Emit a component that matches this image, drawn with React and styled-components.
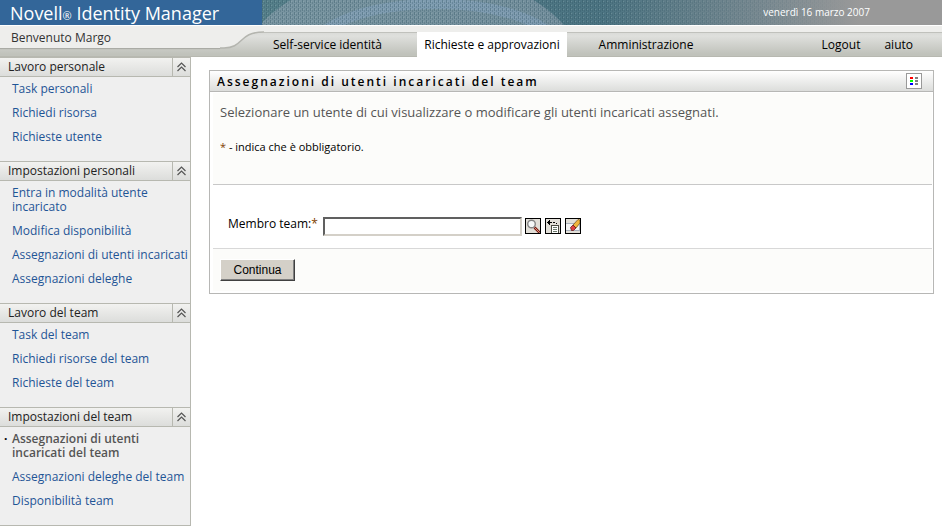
import React, { useState } from 'react'
import styled, { createGlobalStyle, css } from 'styled-components'

const sections = [
  {
    id: 'personal-work',
    title: 'Lavoro personale',
    links: ['Task personali', 'Richiedi risorsa', 'Richieste utente'],
  },
  {
    id: 'personal-settings',
    title: 'Impostazioni personali',
    links: [
      'Entra in modalità utente incaricato',
      'Modifica disponibilità',
      'Assegnazioni di utenti incaricati',
      'Assegnazioni deleghe',
    ],
  },
  {
    id: 'team-work',
    title: 'Lavoro del team',
    links: ['Task del team', 'Richiedi risorse del team', 'Richieste del team'],
  },
  {
    id: 'team-settings',
    title: 'Impostazioni del team',
    links: [
      'Assegnazioni di utenti incaricati del team',
      'Assegnazioni deleghe del team',
      'Disponibilità team',
    ],
  },
]

const currentLink = 'Assegnazioni di utenti incaricati del team'

function BannerArt() {
  return (
    <Art aria-hidden="true">
      <defs>
        <linearGradient id="sky" x1="0" x2="1" y1="0" y2="0">
          <stop offset="0" stopColor="#56808a" />
          <stop offset="0.5" stopColor="#4c7482" />
          <stop offset="0.72" stopColor="#768890" />
          <stop offset="0.88" stopColor="#999999" />
        </linearGradient>
        <linearGradient id="fade" x1="0" x2="1" y1="0" y2="0">
          <stop offset="0.5" stopColor="#fff" />
          <stop offset="0.86" stopColor="#000" />
        </linearGradient>
        <pattern id="weave" width="4" height="4" patternUnits="userSpaceOnUse">
          <rect width="1" height="3" fill="#2c505f" opacity="0.35" />
          <rect x="2" y="2" width="1" height="2" fill="#2c505f" opacity="0.25" />
          <rect x="1" y="1" width="1" height="1" fill="#b6cbd0" opacity="0.25" />
        </pattern>
        <mask id="weaveMask">
          <rect width="100%" height="100%" fill="url(#fade)" />
        </mask>
      </defs>
      <rect width="100%" height="100%" fill="url(#sky)" />
      <ellipse cx="150" cy="70" rx="170" ry="100" fill="#a4b0bc" opacity="0.45" />
      <ellipse cx="174" cy="52" rx="124" ry="48" fill="none" stroke="#90b0d2" strokeWidth="10" opacity="0.35" />
      <rect width="100%" height="100%" fill="url(#weave)" mask="url(#weaveMask)" />
    </Art>
  )
}

function CollapseIcon() {
  return (
    <svg width="9" height="10" viewBox="0 0 9 10" fill="none" stroke="#555" aria-hidden="true">
      <path d="M0.5 5L4.5 1L8.5 5M0.5 9L4.5 5L8.5 9" strokeWidth="1.2" />
    </svg>
  )
}

function LegendIcon() {
  return (
    <svg width="8" height="8" viewBox="0 0 8 8" shapeRendering="crispEdges" aria-hidden="true">
      <path d="M0 0h3v2H0z" fill="#f00" />
      <path d="M0 3h3v2H0z" fill="#0f0" />
      <path d="M0 6h3v2H0z" fill="#00f" />
      <path d="M5 0h3v2H5zM5 3h3v2H5zM5 6h3v2H5z" fill="#808080" />
    </svg>
  )
}

function SearchIcon() {
  return (
    <svg width="14" height="14" viewBox="0 0 14 14" aria-hidden="true">
      <path d="M8.5 8.5L13.5 13.5" stroke="#7a1c10" strokeWidth="2.6" />
      <path d="M9 9L13 13" stroke="#f0b0a0" strokeWidth="0.8" />
      <circle cx="5.5" cy="5" r="3.8" fill="#f6f8f8" stroke="#858585" strokeWidth="1.4" />
    </svg>
  )
}

function HistoryIcon() {
  return (
    <svg width="14" height="14" viewBox="0 0 14 14" shapeRendering="crispEdges" aria-hidden="true">
      <path d="M1 3h1v1H1zM2 2h1v3H2zM3 1h1v5H3zM4 3h2v1H4zM7 3h2v1H7zM10 4h1v1h-1z" fill="#000" />
      <path d="M5 6h8v8H5z" fill="#4a4a40" />
      <path d="M6 7h6v7H6z" fill="#fff" />
      <path d="M7 8h4v1H7zM7 10h4v1H7zM7 12h4v1H7z" fill="#6c7a6c" />
    </svg>
  )
}

function EraseIcon() {
  return (
    <svg width="14" height="14" viewBox="0 0 14 14" aria-hidden="true">
      <path d="M0 4h14v8H0z" fill="#a8b0bc" />
      <path d="M0 5h13v6H0z" fill="#f4f4f4" />
      <path d="M7 6L12 0.5L14 1V4L10 9z" fill="#f2b63c" stroke="#6e4a10" strokeWidth="0.7" />
      <path d="M4.5 8.5L7 6L10 9L7.5 11.5H5.5z" fill="#e04040" stroke="#5a1010" strokeWidth="0.7" />
    </svg>
  )
}

function SidebarSection({ section }) {
  const [open, setOpen] = useState(true)
  return (
    <Section>
      <SectionHeader>
        <SectionTitle>{section.title}</SectionTitle>
        <CollapseButton
          type="button"
          aria-label={section.title}
          aria-expanded={open}
          onClick={() => setOpen(!open)}
        >
          <CollapseIcon />
        </CollapseButton>
      </SectionHeader>
      {open && (
        <LinkList>
          {section.links.map((link) => {
            const current = link === currentLink
            return (
              <LinkItem key={link}>
                <Marker>{current ? '·' : ''}</Marker>
                <SideLink href="#" $current={current}>
                  {link}
                </SideLink>
              </LinkItem>
            )
          })}
        </LinkList>
      )}
    </Section>
  )
}

function App() {
  const [member, setMember] = useState('')

  return (
    <>
      <GlobalStyle />
      <Banner>
        <Brand>
          Novell<Registered>®</Registered> Identity Manager
        </Brand>
        <BannerRight>
          <BannerArt />
          <DateText>venerdì 16 marzo 2007</DateText>
        </BannerRight>
      </Banner>
      <NavBar>
        <Welcome>Benvenuto Margo</Welcome>
        <Curve viewBox="0 0 44 30" aria-hidden="true">
          <path d="M0 0H44V6C18 6 24 22 4 22H0z" fill="#eeeeec" />
          <path d="M44 6C18 6 24 22 4 22H0" fill="none" stroke="#b4b5af" strokeWidth="1.5" />
        </Curve>
        <NavRight>
          <Tabs>
            <Tab href="#">Self-service identità</Tab>
            <Tab href="#" $active>
              Richieste e approvazioni
            </Tab>
            <Tab href="#">Amministrazione</Tab>
          </Tabs>
          <Tools>
            <ToolLink href="#">Logout</ToolLink>
            <ToolLink href="#">aiuto</ToolLink>
          </Tools>
        </NavRight>
      </NavBar>
      <Page>
        <Sidebar>
          {sections.map((section) => (
            <SidebarSection key={section.id} section={section} />
          ))}
        </Sidebar>
        <Main>
          <Panel>
            <PanelHeader>
              <PanelTitle>Assegnazioni di utenti incaricati del team</PanelTitle>
              <LegendButton type="button" aria-label="Legenda">
                <LegendIcon />
              </LegendButton>
            </PanelHeader>
            <PanelBody>
              <Intro>
                <IntroText>
                  Selezionare un utente di cui visualizzare o modificare gli utenti incaricati assegnati.
                </IntroText>
                <Note>
                  <Star>*</Star> - indica che è obbligatorio.
                </Note>
              </Intro>
              <FormRow>
                <Label htmlFor="member">
                  Membro team:<Star>*</Star>
                </Label>
                <TextInput
                  id="member"
                  type="text"
                  value={member}
                  onChange={(e) => setMember(e.target.value)}
                />
                <IconButton type="button" aria-label="Cerca">
                  <SearchIcon />
                </IconButton>
                <IconButton type="button" aria-label="Cronologia">
                  <HistoryIcon />
                </IconButton>
                <IconButton type="button" aria-label="Cancella" onClick={() => setMember('')}>
                  <EraseIcon />
                </IconButton>
              </FormRow>
              <Actions>
                <SubmitButton type="button">Continua</SubmitButton>
              </Actions>
            </PanelBody>
          </Panel>
        </Main>
      </Page>
    </>
  )
}

const GlobalStyle = createGlobalStyle`
  * {
    box-sizing: border-box;
  }

  body {
    margin: 0;
    background: #fff;
    color: #000;
    font-family: 'Trebuchet MS', 'Open Sans', sans-serif;
    font-size: 12px;
    line-height: 14px;
  }

  a {
    text-decoration: none;
  }
`

const silver = css`
  background: linear-gradient(#f2f2f0, #dcdddb);
`

const Banner = styled.header`
  display: flex;
  height: 25px;
`

const Brand = styled.div`
  width: 262px;
  flex-shrink: 0;
  padding-left: 10px;
  background: #336699;
  color: #fff;
  font-size: 18px;
  line-height: 26px;
  white-space: nowrap;
`

const Registered = styled.span`
  font-size: 11px;
`

const BannerRight = styled.div`
  flex: 1;
  display: grid;
  overflow: hidden;
`

const Art = styled.svg`
  grid-area: 1 / 1;
  width: 100%;
  height: 25px;
`

const DateText = styled.span`
  grid-area: 1 / 1;
  justify-self: end;
  z-index: 1;
  padding-right: 72px;
  color: #fff;
  font-size: 10px;
  line-height: 24px;
`

const NavBar = styled.nav`
  display: flex;
  height: 32px;
  border-top: 1px solid #fff;
  border-bottom: 1px solid #b7b8b0;
  background: linear-gradient(#d9dad7 6px, #dfe0dd 10px, #c0c2bb 28px);
`

const Welcome = styled.div`
  width: 220px;
  height: 22px;
  flex-shrink: 0;
  padding-left: 11px;
  background: #eeeeec;
  box-shadow: 0 1px 1px #aaaba5;
  color: #333;
  line-height: 24px;
`

const Curve = styled.svg`
  width: 44px;
  height: 30px;
  flex-shrink: 0;
`

const NavRight = styled.div`
  flex: 1;
  display: flex;
  justify-content: space-between;
  border-top: 6px solid #eeeeec;
  box-shadow: inset 0 1px 0 #c0c1bc;
`

const Tabs = styled.div`
  display: flex;
`

const Tab = styled.a`
  width: 158px;
  height: 25px;
  color: #000;
  line-height: 26px;
  text-align: center;
  white-space: nowrap;
  background: ${(props) => (props.$active ? '#fff' : 'transparent')};

  &:first-child {
    width: 153px;
    padding-right: 26px;
  }

  &:nth-child(2) {
    width: 150px;
  }
`

const Tools = styled.div`
  display: flex;
  gap: 24px;
  padding-right: 29px;
`

const ToolLink = styled.a`
  color: #000;
  line-height: 26px;
`

const Page = styled.div`
  display: flex;
  align-items: flex-start;
`

const Sidebar = styled.aside`
  width: 191px;
  flex-shrink: 0;
  border-right: 1px solid #b7b8b0;
  border-bottom: 1px solid #b7b8b0;
  background: #efefef;
`

const Section = styled.section`
  padding-bottom: 12px;
`

const SectionHeader = styled.div`
  display: flex;
  height: 20px;
  border-top: 1px solid #b7b8b0;
  border-bottom: 1px solid #b7b8b0;
  ${silver}
`

const SectionTitle = styled.h2`
  flex: 1;
  margin: 0;
  padding-left: 8px;
  color: #222;
  font-size: 12px;
  font-weight: normal;
  line-height: 18px;
`

const CollapseButton = styled.button`
  display: flex;
  align-items: center;
  justify-content: center;
  width: 18px;
  padding: 0;
  border: 0;
  border-left: 1px solid #b7b8b0;
  background: none;
`

const LinkList = styled.ul`
  margin: 0;
  padding: 0;
  list-style: none;
`

const LinkItem = styled.li`
  display: flex;
  padding: 5px 0;
`

const Marker = styled.span`
  width: 12px;
  flex-shrink: 0;
  padding-left: 4px;
  color: #000;
  font-weight: bold;
`

const SideLink = styled.a`
  max-width: 178px;
  color: ${(props) => (props.$current ? '#555' : '#1f5596')};
  font-weight: ${(props) => (props.$current ? 600 : 400)};
`

const Main = styled.main`
  flex: 1;
  min-width: 0;
  padding: 13px 8px 0 18px;
`

const Panel = styled.section`
  border: 1px solid #b7b7b5;
`

const PanelHeader = styled.div`
  display: flex;
  align-items: center;
  justify-content: space-between;
  height: 21px;
  padding: 0 11px 0 7px;
  border-bottom: 1px solid #b7b7b5;
  background: linear-gradient(#fff, #dcdddb);
`

const PanelTitle = styled.h1`
  margin: 0;
  padding-top: 2px;
  font-size: 12px;
  font-weight: 600;
  letter-spacing: 2px;
  white-space: nowrap;
`

const LegendButton = styled.button`
  display: flex;
  align-items: center;
  justify-content: center;
  width: 16px;
  height: 16px;
  padding: 0;
  border: 1px solid #999;
  background: #fff;
`

const PanelBody = styled.div`
  padding: 1px 1px 2px 3px;
`

const Intro = styled.div`
  min-height: 92px;
  padding: 10px 7px 0;
  border-bottom: 1px solid #c8c8c8;
  background: #fcfcfa;
`

const IntroText = styled.p`
  margin: 0;
  color: #555;
  font-size: 13px;
  line-height: 18px;
`

const Note = styled.p`
  margin: 19px 0 0;
  font-size: 11px;
`

const Star = styled.span`
  color: #804000;
`

const FormRow = styled.div`
  display: flex;
  align-items: center;
  gap: 3px;
  height: 64px;
  padding: 19px 15px 0;
  border-bottom: 1px solid #d8d8d8;
`

const Label = styled.label`
  width: 92px;
  padding-bottom: 4px;
  white-space: nowrap;
`

const TextInput = styled.input`
  width: 199px;
  height: 19px;
  padding: 0 2px;
  border: 2px solid;
  border-color: #606060 #d4d0c8 #d4d0c8 #606060;
  background: #fff;
  font-size: 12px;
`

const IconButton = styled.button`
  display: flex;
  width: 16px;
  height: 16px;
  margin-right: 1px;
  padding: 0;
  border: 1px solid #000;
  background: #e2dfd8;
`

const Actions = styled.div`
  padding: 10px 7px;
  background: #fcfcfa;
`

const SubmitButton = styled.button`
  display: block;
  width: 75px;
  height: 22px;
  padding: 0;
  border: 1px solid;
  border-color: #fff #404040 #404040 #fff;
  background: #d4d0c8;
  box-shadow: inset -1px -1px 0 #808080;
  font-family: 'Liberation Sans', Arial, sans-serif;
  font-size: 12px;
`

export default App
